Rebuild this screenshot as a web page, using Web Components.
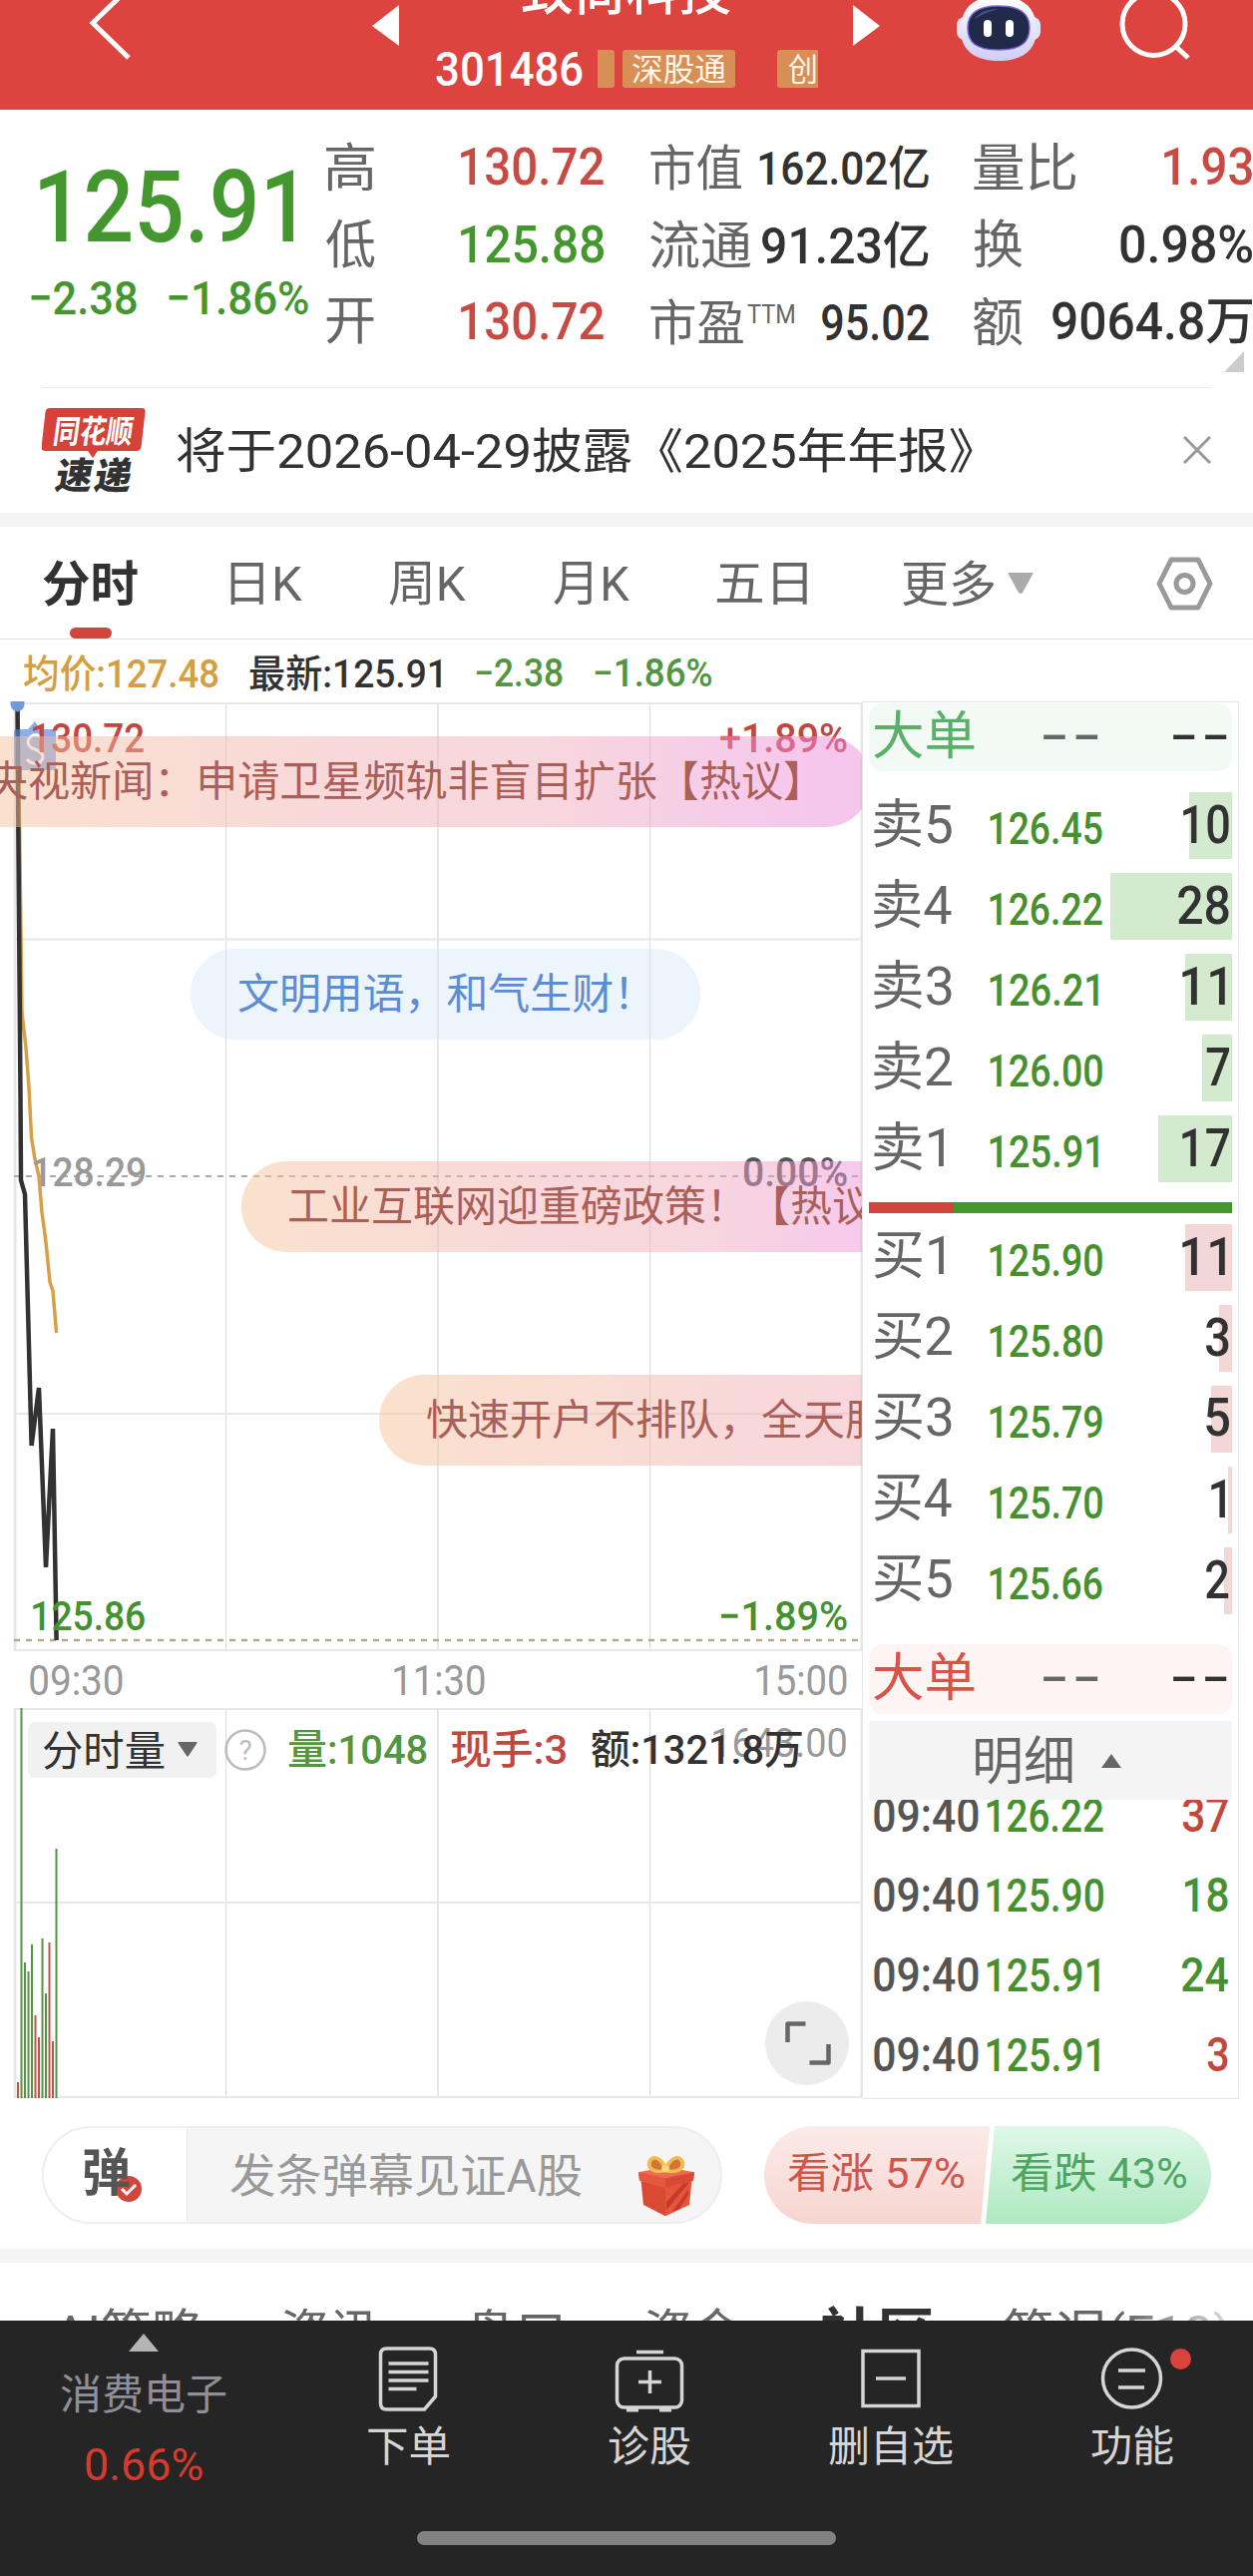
<!DOCTYPE html>
<html lang="zh-CN">
<head>
<meta charset="utf-8">
<title>致尚科技 301486</title>
<style>
html,body{margin:0;padding:0;background:#fff}
body{width:1256px;height:2582px;overflow:hidden;font-family:Roboto,"Noto Sans CJK SC",sans-serif;color:#323232}
</style>
</head>
<body>
<stock-page></stock-page>
<script>
const FAMILY='Roboto,"Noto Sans CJK SC",sans-serif';
const pen=document.createElement('canvas').getContext('2d');

/* Text whose box is its ink box: s = font size, w = ink width, b = weight, ls = letter spacing */
customElements.define('fit-text',class extends HTMLElement{
  connectedCallback(){
    if(this.shadowRoot)return;
    const s=+this.getAttribute('s')||42,b=this.getAttribute('b')||400,ls=+this.getAttribute('ls')||0;
    pen.font=`${b} ${s}px ${FAMILY}`;
    pen.letterSpacing=ls+'px';
    const m=pen.measureText(this.textContent);
    const right=m.actualBoundingBoxRight,left=m.actualBoundingBoxLeft,ink=right+left;
    const w=+this.getAttribute('w')||ink,k=w/ink,h=m.actualBoundingBoxAscent+m.actualBoundingBoxDescent;
    this.attachShadow({mode:'open'}).innerHTML=`<style>
      :host{display:block;flex:none;width:${w}px;height:${h}px}
      span{display:block;width:max-content;white-space:nowrap;font:${b} ${s}px/${s}px ${FAMILY};letter-spacing:${ls}px;
        transform-origin:0 0;transform:translate(${left*k}px,${m.actualBoundingBoxAscent-.8418*s}px) scaleX(${k})}
    </style><span><slot></slot></span>`;
  }
});

const define=(name,css,html)=>customElements.define(name,class extends HTMLElement{
  connectedCallback(){
    if(this.shadowRoot)return;
    this.attachShadow({mode:'open'}).innerHTML=`<style>:host{display:block}*{box-sizing:border-box}svg{display:block;flex:none}${css}</style>${typeof html==='function'?html(this):html}`;
  }
});

define('app-header',`
  :host{height:110px;background:#dd4440;border-bottom:1px solid #a8605f;box-sizing:border-box;overflow:hidden;color:#fff}
  .bar{display:flex;height:109px}
  .mid{width:400px;height:109px}
  .title{margin:-34px 0 0 103px}
  .code{display:flex;align-items:center;height:38px;margin-left:17px;width:383px;overflow:hidden}
  .wrap{padding-top:34px}
  .tag{background:#d88f56;height:38px;border-radius:3px;display:flex;align-items:center;flex:none;color:#fff6e8}
`,`<div class="bar">
  <svg width="420" height="109" viewBox="0 0 420 109"><path d="M125-8 93 23l36 35" fill="none" stroke="#fff" stroke-width="5"/><path d="M373 26 400 5v41z" fill="#fff"/></svg>
  <div class="mid"><fit-text class="title" s="52" w="209" b="500">致尚科技</fit-text>
   <div class="wrap"><div class="code"><fit-text s="48" w="147" b="500">301486</fit-text>
    <div class="tag" style="width:17px;margin-left:15px;border-radius:0 3px 3px 0"></div>
    <div class="tag" style="width:113px;margin-left:8px;padding-left:10px"><fit-text s="32" w="93">深股通</fit-text></div>
    <div class="tag" style="width:70px;margin-left:42px;padding-left:11px"><fit-text s="32" w="28">创</fit-text></div>
   </div></div></div>
  <svg width="436" height="109" viewBox="820 0 436 109">
   <defs><linearGradient id="h" x1="0" y1="0" x2="0" y2="1"><stop offset="0" stop-color="#fff"/><stop offset="1" stop-color="#cfcdf3"/></linearGradient></defs>
   <path d="M882 26 855 5v41z" fill="#fff"/>
   <rect x="959" y="17" width="84" height="23" rx="8" fill="#e3e1f8"/>
   <path d="M1001-4c28 0 38 15 38 34 0 21-15 31-38 31s-38-10-38-31c0-19 10-34 38-34z" fill="url(#h)"/>
   <path d="M1001 6c22 0 31 8 31 22s-8 22-31 22-31-8-31-22 9-22 31-22z" fill="#222a4a" stroke="#7466d8" stroke-width="1.500"/>
   <path d="M977 19q6-10 24-10-15 4-24 10z" fill="#47507a"/>
   <rect x="986" y="20" width="8" height="17" rx="4" fill="#fff"/><rect x="1008" y="20" width="8" height="17" rx="4" fill="#fff"/>
   <circle cx="1156.500" cy="24" r="31.500" fill="none" stroke="#fff" stroke-width="5"/><path d="M1178 46l13 12" stroke="#fff" stroke-width="5"/>
  </svg></div>`);

define('quote-panel',`
  :host{height:278px;box-sizing:border-box;padding-top:19px;position:relative}
  .cols{display:flex;height:233px}
  .g{color:#44962e}.r{color:#c94a43}
  .now{width:327px;padding:40px 0 0 40px;flex:none}
  .chg{display:flex;margin:39px 0 0 -9px;gap:32px;align-items:center}
  .col{width:279px;margin-right:45px;flex:none}
  .col:nth-child(2){width:278px;margin-right:47px}
  .row{display:flex;justify-content:space-between;align-items:center;height:77.500px}
  .l{color:#666;display:flex;gap:4px;align-items:flex-start}
  .corner{display:flex;justify-content:flex-end;padding-right:9px;margin-top:-10px}
`,`<div class="cols">
  <div class="now g"><fit-text s="101" w="254" b="500">125.91</fit-text><div class="chg"><fit-text s="47" w="106" b="500">−2.38</fit-text><fit-text s="47" w="140" b="500">−1.86%</fit-text></div></div>
  <div class="col">
   <div class="row"><fit-text class="l" s="52" w="48">高</fit-text><fit-text class="r" s="52" w="143" b="500">130.72</fit-text></div>
   <div class="row"><fit-text class="l" s="52" w="49">低</fit-text><fit-text class="g" s="52" w="143" b="500">125.88</fit-text></div>
   <div class="row"><fit-text class="l" s="52" w="48">开</fit-text><fit-text class="r" s="52" w="143" b="500">130.72</fit-text></div></div>
  <div class="col">
   <div class="row"><fit-text class="l" s="49" w="91">市值</fit-text><fit-text s="47" w="170" b="500">162.02亿</fit-text></div>
   <div class="row"><fit-text class="l" s="52" w="101">流通</fit-text><fit-text s="50" w="167" b="500">91.23亿</fit-text></div>
   <div class="row"><div class="l"><fit-text s="49" w="93">市盈</fit-text><fit-text style="margin-top:6px" s="25" w="47">TTM</fit-text></div><fit-text s="50" w="107" b="500">95.02</fit-text></div></div>
  <div class="col" style="margin:0">
   <div class="row"><fit-text class="l" s="52" w="102">量比</fit-text><fit-text class="r" s="52" w="88" b="500">1.93</fit-text></div>
   <div class="row"><fit-text class="l" s="52" w="49">换</fit-text><fit-text s="52" w="132" b="500">0.98%</fit-text></div>
   <div class="row"><fit-text class="l" s="52" w="49">额</fit-text><fit-text s="51" w="200" b="500">9064.8万</fit-text></div></div>
 </div><div class="corner"><svg width="20" height="21"><path d="M20 0V21H0z" fill="#ccc"/></svg></div>`);

define('news-bar',`
  :host{height:126px;box-sizing:border-box;margin:0 42px;border-top:1px solid #ececec}
  .row{display:flex;align-items:center;height:124px}
`,`<div class="row">
  <svg width="104" height="86" viewBox="43 408 104 86"><path d="M51 409h92q4 0 3.500 4l-4 35q-.5 4-5 4H99l-5 7-5-7H46q-4 0-3.500-4l4-35q.5-4 4.500-4z" fill="#d64139"/>
   <text transform="translate(53 444) skewX(-8)" font-family='"Noto Sans CJK SC",sans-serif' font-weight="700" font-size="32" fill="#fff" textLength="80" lengthAdjust="spacingAndGlyphs">同花顺</text>
   <text transform="translate(55 490) skewX(-10)" font-family='"Noto Sans CJK SC",sans-serif' font-weight="900" font-size="37" fill="#323232" textLength="76" lengthAdjust="spacing">速递</text></svg>
  <fit-text s="48" w="798" style="margin-left:31px">将于2026-04-29披露《2025年年报》</fit-text>
  <svg style="margin-left:auto" width="28" height="28"><path d="M1 1 27 27M27 1 1 27" stroke="#999" stroke-width="3"/></svg></div>`);

define('chart-tabs',`
  :host{height:113px;box-sizing:border-box;border-bottom:1px solid #e4e4e4;position:relative;color:#666}
  .row{display:flex;align-items:center;height:113px;padding-left:43px}
  .on{color:#323232}
  .mark{position:absolute;left:70px;bottom:0;width:42px;height:11px;border-radius:6px;background:#d2453d}
`,`<div class="row">
  <fit-text class="on" s="49" w="95" b="700">分时</fit-text>
  <fit-text style="margin-left:93px" s="49" w="72">日K</fit-text>
  <fit-text style="margin-left:87px" s="49" w="77">周K</fit-text>
  <fit-text style="margin-left:88px" s="49" w="76">月K</fit-text>
  <fit-text style="margin-left:87px" s="49" w="91">五日</fit-text>
  <fit-text style="margin-left:96px" s="49" w="92">更多</fit-text>
  <svg style="margin-left:13px" width="26" height="21"><path d="M0 0H26L15 20q-2 2-4 0z" fill="#aaa"/></svg>
  <svg style="margin-left:123px" width="57" height="54" viewBox="0 0 57 54"><path d="M15 3H42L54 27 42 51H15L3 27z" fill="none" stroke="#999" stroke-width="5" stroke-linejoin="round"/><circle cx="28.500" cy="27" r="8.500" fill="none" stroke="#999" stroke-width="5"/></svg>
 </div><div class="mark"></div>`);

define('price-line',`
  :host{height:62px;box-sizing:border-box;padding-top:7px}
  .row{display:flex;align-items:center;height:54px;padding-left:24px}
`,`<div class="row">
  <fit-text style="color:#d59f41" s="39" w="195" b="500">均价:127.48</fit-text>
  <fit-text style="margin-left:31px" s="39" w="192" b="500">最新:125.91</fit-text>
  <fit-text style="margin-left:35px;color:#549540" s="39" w="87" b="500">−2.38</fit-text>
  <fit-text style="margin-left:32px;color:#549540" s="39" w="117" b="500">−1.86%</fit-text></div>`);

define('danmu-pill',`
  :host{position:absolute;height:91px;border-radius:46px;display:flex;align-items:center;padding:0 46px 3px 48px;box-sizing:border-box;color:#ab5f59;
    background:linear-gradient(90deg,rgba(245,196,154,.5),rgba(240,170,175,.46) 45%,rgba(240,170,185,.48) 65%,rgba(236,142,220,.5) 95%)}
  :host([calm]){color:#5c8cd4;background:rgba(205,225,246,.38)}
`,`<slot></slot>`);

const grid=(ys,y0,y1)=>{
  const v=[[15,3],[226.5,1],[439,2],[651.5,1],[864,3]].map(([x,w])=>`<path d="M${x} ${y0}V${y1}" stroke-width="${w}"${w===1?' stroke="#dcdcdc"':''}/>`).join('');
  return `<g stroke="#e7e7e7">${v}${ys.map(y=>`<path d="M14 ${y}H864" stroke-width="2"/>`).join('')}</g>`;
};

define('price-chart',`
  :host{position:relative;width:864px;height:952px;overflow:hidden}
  fit-text{position:absolute}
  danmu-pill fit-text{position:static}
`,`<svg width="864" height="952" viewBox="0 703 864 952">
  ${grid([705,941.5,1417,1654],705,1654)}
  <path d="M14 1179H864" stroke="#aaa" stroke-width="2" stroke-dasharray="6 6"/>
  <path d="M14 1644H864" stroke="#b3a98c" stroke-width="2.500" stroke-dasharray="6 6"/>
  <path d="M18 705 22 1015 26 1050 29 1090 31.500 1140 35 1162 39 1179 42 1215 46 1245 50 1285 53 1294 56.600 1336" fill="none" stroke="#d5a046" stroke-width="3.500"/>
  <path d="M17.500 705 18.500 850 20.500 1100 21 1183 25 1197 31.600 1449 39 1391 46 1571 53 1432 56.600 1644" fill="none" stroke="#323232" stroke-width="4.500" stroke-linejoin="bevel"/>
  <path d="M10.500 703h14q1 9-7 10.500-8-1.500-7-10.500z" fill="#6f9bdd"/>
  <path d="M17 731H28L35 723l5 8h13q3 0 3 3v35q0 3-3 3H17q-3 0-3-3V734q0-3 3-3z" fill="#4d86df" fill-opacity=".66"/>
  <path d="M42 740q-4-5-9-3-7 4-4 10 2 3 6 4 8 3 8 8-1 6-8 6-5 0-8-4" fill="none" stroke="#fff" stroke-width="3"/>
 </svg>
 <fit-text style="left:33px;top:23px;color:#c5453f" s="41" w="111" b="500">130.72</fit-text>
 <fit-text style="left:722px;top:23px;color:#c5453f" s="41" w="127" b="500">+1.89%</fit-text>
 <fit-text style="left:34px;top:458px;color:#999" s="41" w="111" b="500">128.29</fit-text>
 <fit-text style="left:746px;top:458px;color:#555" s="41" w="103" b="500">0.00%</fit-text>
 <fit-text style="left:33px;top:903px;color:#44912f" s="41" w="112" b="500">125.86</fit-text>
 <fit-text style="left:723px;top:903px;color:#44912f" s="41" w="126" b="500">−1.89%</fit-text>
 <danmu-pill style="right:-9px;top:35px;padding-right:73px"><fit-text s="42" w="813">央视新闻：申请卫星频轨非盲目扩张【热议】</fit-text></danmu-pill>
 <danmu-pill calm style="left:191px;top:248px;padding-right:73px"><fit-text s="42" w="390">文明用语，和气生财！</fit-text></danmu-pill>
 <danmu-pill style="left:242px;top:461px;padding-right:46px"><fit-text s="42">工业互联网迎重磅政策！【热议】</fit-text></danmu-pill>
 <danmu-pill style="left:380px;top:674.500px;padding-right:100px"><fit-text s="42">快速开户不排队，全天服务在线等你来</fit-text></danmu-pill>`);

define('time-axis',`:host{height:57px}.row{display:flex;justify-content:space-between;align-items:center;height:57px;padding:0 15px 0 30px;color:#999}`,
`<div class="row"><fit-text s="42" w="93">09:30</fit-text><fit-text s="42" w="91">11:30</fit-text><fit-text s="42" w="91">15:00</fit-text></div>`);

define('volume-chart',`
  :host{position:relative;width:864px;height:391px}
  .bg{position:absolute;inset:0}
  .row{position:relative;display:flex;align-items:center;padding:13px 0 0 28px;height:70px}
  .btn{width:189px;height:56px;border-radius:7px;background:#f1f1f1;display:flex;align-items:center;padding-left:15px;gap:13px;flex:none}
  .max{position:absolute;left:715px;top:21px;color:#999}
`,()=>{
  const bars=[[18,2087,1],[21.5,1712,0],[25,1967,0],[28.5,1976,0],[32,1949,0],[35.5,2020,1],[39,2042,1],[42.5,1943,0],[46,1998,0],[49.5,1947,1],[53,2046,1],[56.5,1853,0]];
  return `<svg class="bg" width="864" height="391" viewBox="0 1712 864 391">${grid([1713,1907,2102],1712,2103)}
   ${bars.map(([x,y,r])=>`<rect x="${x-1}" y="${y}" width="2" height="${2103-y}" fill="${r?'#c0544c':'#559443'}"/>`).join('')}
   <circle cx="809" cy="2048" r="42" fill="#ececec"/><path d="M789.500 2047v-18.500h18M830.500 2049v18.500h-19" fill="none" stroke="#666" stroke-width="4.500" stroke-linejoin="round"/></svg>
  <fit-text class="max" s="41" w="133">1643.00</fit-text>
  <div class="row"><div class="btn"><fit-text s="42" w="122">分时量</fit-text><svg width="20" height="15"><path d="M1 0H19Q20 0 19.500 1L11 14q-1 1-2 0L.5 1Q0 0 1 0z" fill="#666"/></svg></div>
   <svg style="margin-left:8px" width="42" height="42"><circle cx="21" cy="21" r="19.500" fill="none" stroke="#bbb" stroke-width="2.500"/><text x="21" y="31" text-anchor="middle" font-family="Roboto,sans-serif" font-size="28" fill="#bbb">?</text></svg>
   <fit-text style="margin-left:22px;color:#549540" s="41" w="139" b="500">量:1048</fit-text>
   <fit-text style="margin-left:24px;color:#c2483f" s="41" w="116" b="500">现手:3</fit-text>
   <fit-text style="margin-left:25px" s="41" w="211" b="500">额:1321.8万</fit-text></div>`;});

define('big-order',`
  :host{display:flex;align-items:center;height:68px;border-radius:14px;background:#f3faf6;color:#5bb068;padding-left:5px;margin-top:1px}
  :host([buy]){height:70px;margin-top:0;background:#fdf4f4;color:#d95347}
  .a{margin-left:69px;color:#666}.b{margin-left:75px;color:#323232}
`,`<fit-text s="52" w="101" style="margin-top:-4px">大单</fit-text><fit-text class="a" s="60" w="55" ls="5">--</fit-text><fit-text class="b" s="60" w="54" ls="5">--</fit-text>`);

define('book-row',`
  :host{display:flex;align-items:center;height:67px;margin-bottom:14px;padding:0 3px 0 5px;background:linear-gradient(#d3eacf,#d3eacf) right/var(--bar) 100% no-repeat}
  :host([buy]){background-image:linear-gradient(#f3d6d6,#f3d6d6)}
  .l{width:116px;color:#666}.p{margin-top:5px;color:#46902f}.q{margin-left:auto;margin-top:-2px}
`,el=>{
  const [l,p,q]=[el.getAttribute('name'),el.getAttribute('price'),el.getAttribute('qty')];
  const qw={10:46,28:51,11:43,17:47,1:14}[q]||23,end={11:4,1:4}[q]||0;
  return `<div class="l"><fit-text s="53" w="${l.endsWith('1')?70:78}" style="margin-top:-3px">${l}</fit-text></div>
   <fit-text class="p" s="44" w="${p.endsWith('1')?109:113}" b="500">${p}</fit-text>
   <fit-text class="q" style="margin-right:${end}px" s="53" w="${qw}" b="500">${q}</fit-text>`;});

define('trade-row',`
  :host{display:flex;align-items:center;height:80px;padding:0 4px 0 5px}
  .t{color:#555}.p{margin:1px 0 0 8px;color:#46902f}.q{margin-left:auto}
  .q.up{color:#c2483f}.q.down{color:#46902f}
`,el=>{
  const p=el.getAttribute('price'),q=el.getAttribute('qty');
  return `<fit-text class="t" s="49" w="105" b="500">09:40</fit-text><fit-text class="p" s="46" w="${p.endsWith('1')?113:117}" b="500">${p}</fit-text>
   <fit-text class="q ${el.getAttribute('dir')}" s="49" w="${{37:46,18:43,24:47}[q]||21}" b="500">${q}</fit-text>`;});

define('order-book',`
  :host{width:378px;height:1401px;box-sizing:border-box;border:1px solid #e7e7e7;padding:0 6px;overflow:hidden}
  .sell{padding-top:21px;display:flow-root;height:412px}
  .split{display:flex;height:11px;margin:0 0 11px;background:#44962e}
  .split i{width:85px;background:#d2453d}
  .buy{height:421px}
  .head{display:flex;align-items:center;height:79px;margin-top:7px;background:#f4f4f4;color:#666;padding-left:107px;gap:29px}
  .trades{height:297px;overflow:hidden}.trades trade-row:first-child{margin-top:-25px}
`,`<big-order></big-order>
 <div class="sell">${[['卖5','126.45',10,43],['卖4','126.22',28,122],['卖3','126.21',11,47],['卖2','126.00',7,30],['卖1','125.91',17,74]].map(r=>`<book-row name="${r[0]}" price="${r[1]}" qty="${r[2]}" style="--bar:${r[3]}px"></book-row>`).join('')}</div>
 <div class="split" style="margin-top:20px;transform:none"><i></i></div>
 <div class="buy">${[['买1','125.90',11,47],['买2','125.80',3,13],['买3','125.79',5,21],['买4','125.70',1,4],['买5','125.66',2,8]].map(r=>`<book-row buy name="${r[0]}" price="${r[1]}" qty="${r[2]}" style="--bar:${r[3]}px"></book-row>`).join('')}</div>
 <big-order buy></big-order>
 <div class="head"><fit-text s="52" w="97">明细</fit-text><svg width="20" height="14"><path d="M10 0 20 14H0z" fill="#666"/></svg></div>
 <div class="trades"><trade-row price="126.22" qty="37" dir="up"></trade-row><trade-row price="125.90" qty="18" dir="down"></trade-row><trade-row price="125.91" qty="24" dir="down"></trade-row><trade-row price="125.91" qty="3" dir="up"></trade-row></div>`);

define('danmu-input',`
  :host{display:flex;height:151px;box-sizing:border-box;padding:28px 42px 0}
  .pill{display:flex;align-items:center;width:682px;height:98px;border:2px solid #eee;border-radius:49px;background:#f5f5f5;overflow:hidden}
  .dan{display:flex;align-items:center;width:144px;height:94px;background:#fff;border-right:1px solid #e8e8e8;padding-left:40px;color:#555}
  .vote{display:flex;align-items:center;height:98px}
  .up{width:226px;margin-left:42px;padding:0 0 6px 24px;border-radius:49px 0 0 49px;clip-path:polygon(0 0,100% 0,calc(100% - 9px) 100%,0 100%);background:linear-gradient(#fbebe9,#f7d5d1);color:#d0564c}
  .down{width:226px;margin-left:-4px;padding:0 0 6px 26px;border-radius:0 49px 49px 0;clip-path:polygon(9px 0,100% 0,100% 100%,0 100%);background:linear-gradient(#dff8e8,#aee8c1);color:#4fa662}
`,`<div class="pill"><div class="dan"><fit-text s="51" w="46" b="700" style="margin-top:-8px">弹</fit-text><svg style="margin:27px 0 0 -17px" width="32" height="32" viewBox="0 0 32 32"><circle cx="16" cy="16" r="14" fill="#d0473d" stroke="#fff" stroke-width="2"/><path d="M9 16l5 5 9-9" fill="none" stroke="#fff" stroke-width="3"/></svg></div>
  <fit-text style="margin-left:43px;color:#999" s="46" w="352">发条弹幕见证A股</fit-text>
  <svg style="margin:22px 0 0 56px" width="58" height="62" viewBox="0 0 58 72" preserveAspectRatio="none">
   <path d="M3 24 28 33V71L6 58z" fill="#d94a34"/><path d="M55 24 28 33V71L52 58z" fill="#e4553a"/><path d="M35 66 51 40v6L42 63zM29 55 47 32h5L29 64z" fill="#c53a2a"/>
   <path d="M1 20 28 14 57 20 56 30 28 38 2 30z" fill="#ee6a50"/><path d="M1 20 28 27V38L2 30z" fill="#e5573f"/><path d="M57 20 28 27V38L56 30z" fill="#d94a35"/>
   <path d="M28 18C20 21 10 18 12 8 15-1 25 3 28 18 32 3 42-1 45 8 47 18 37 21 28 18z" fill="#d3743c" stroke="#f2bd4e" stroke-width="4"/><circle cx="28" cy="16" r="4" fill="#f9d675"/></svg></div>
 <div class="vote up"><fit-text s="42" w="176">看涨 57%</fit-text></div><div class="vote down"><fit-text s="42" w="175">看跌 43%</fit-text></div>`);

define('section-tabs',`
  :host{height:58px;overflow:hidden;position:relative;color:#666}
  .row{display:flex;align-items:flex-start;padding:45px 0 0 54px}
  .fade{position:absolute;right:0;top:0;width:130px;height:58px;background:linear-gradient(90deg,rgba(255,255,255,0),rgba(255,255,255,.75) 80%)}
`,`<div class="row"><fit-text s="49" w="149">AI策略</fit-text><fit-text style="margin-left:80px" s="49" w="95">资讯</fit-text><fit-text style="margin-left:89px" s="49" w="95">盘口</fit-text><fit-text style="margin-left:85px" s="49" w="95">资金</fit-text>
 <fit-text style="margin:-3px 0 0 80px;color:#323232" s="57" w="113" b="700">社区</fit-text><fit-text style="margin-left:72px" s="49" w="224">简况(F10)</fit-text></div><div class="fade"></div>`);

define('nav-item',`
  :host{display:flex;flex-direction:column;align-items:center;width:242px;flex:none;color:#d5d5d5}
  svg{margin:14px 0 13px;overflow:visible;fill:none;stroke:#d5d5d5;stroke-width:3.500}
`,el=>({
  order:`<svg width="58" height="78" viewBox="380.500 2340 58 78"><path d="M388 2354h43q6 0 6 6v42l-11 13h-38q-6 0-6-6v-49q0-6 6-6z"/><path d="M390 2369h40M390 2377.500h40M390 2386h40M390 2394.500h28"/></svg>`,
  check:`<svg width="70" height="78" viewBox="615 2340 70 78"><rect x="617.500" y="2364" width="65" height="49" rx="7"/><path d="M637 2357.500h27M650.500 2376v23M639 2387.500h23"/><path d="M627 2415h12M660 2415h12" stroke-width="5"/></svg>`,
  remove:`<svg width="60" height="78" viewBox="862 2340 60 78"><rect x="864" y="2356.500" width="56" height="55"/><path d="M877 2384h30"/></svg>`,
  more:`<svg width="62" height="78" viewBox="1104 2340 62 78"><circle cx="1134.500" cy="2384" r="29"/><path d="M1121 2376h27M1121 2393h26"/><circle cx="1183.500" cy="2364.500" r="10.500" fill="#d8433b" stroke="none"/></svg>`
 })[el.getAttribute('icon')]+`<slot></slot>`);

define('bottom-nav',`
  :host{height:256px;background:#252525}
  .row{display:flex;height:211px}
  .sector{width:288px;flex:none;display:flex;flex-direction:column;align-items:center}
  .home{width:420px;height:14px;border-radius:7px;background:#818181;margin:0 auto}
`,`<div class="row"><div class="sector"><svg style="margin:13px 0 22px" width="30" height="18"><path d="M15 0 30 18H0z" fill="#b5b5b5"/></svg><fit-text style="color:#8f8e99" s="42" w="166">消费电子</fit-text><fit-text style="color:#d53c2d;margin-top:35px" s="44" w="117">0.66%</fit-text></div>
  <nav-item icon="order"><fit-text s="42" w="81">下单</fit-text></nav-item>
  <nav-item icon="check"><fit-text s="42" w="82">诊股</fit-text></nav-item>
  <nav-item icon="remove"><fit-text s="42" w="124">删自选</fit-text></nav-item>
  <nav-item icon="more"><fit-text s="42" w="82">功能</fit-text></nav-item></div><div class="home"></div>`);

define('stock-page',`
  :host{width:1256px;height:2582px;overflow:hidden;background:#fff}
  .band{height:14px;background:#f4f4f4}
  .main{display:flex;height:1400px}
`,`<app-header></app-header><quote-panel></quote-panel><news-bar></news-bar><div class="band"></div>
 <chart-tabs></chart-tabs><price-line></price-line>
 <div class="main"><div><price-chart></price-chart><time-axis></time-axis><volume-chart></volume-chart></div><order-book></order-book></div>
 <danmu-input></danmu-input><div class="band"></div><section-tabs></section-tabs><bottom-nav></bottom-nav>`);
</script>
</body>
</html>
